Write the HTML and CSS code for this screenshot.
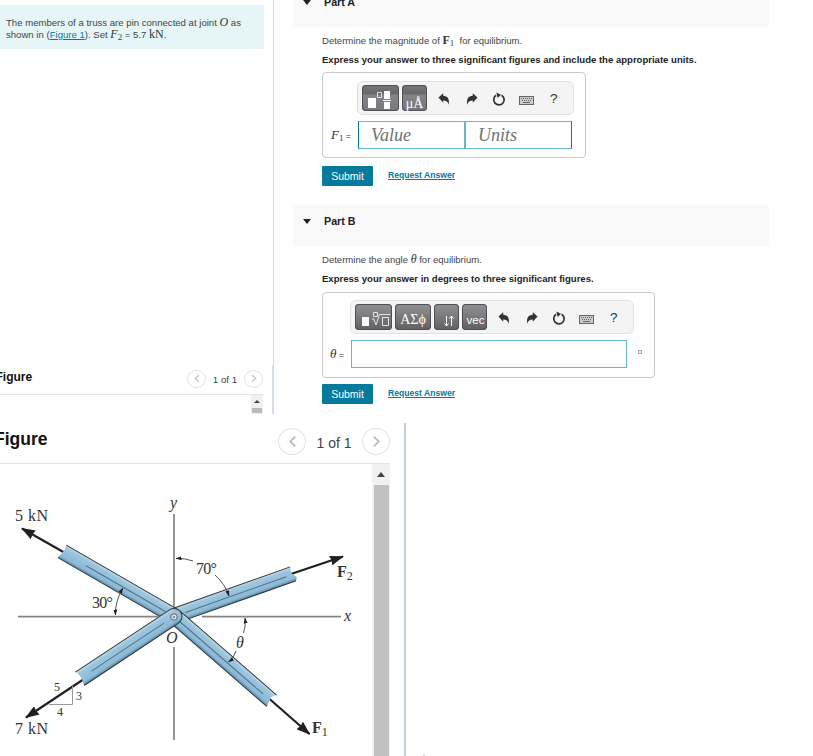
FILE: index.html
```html
<!DOCTYPE html>
<html lang="en">
<head>
<meta charset="utf-8">
<title>Truss equilibrium</title>
<link rel="stylesheet" href="styles.css">
</head>
<body>
<svg class="defs" width="0" height="0" aria-hidden="true">
  <defs>
    <symbol id="undo" viewBox="0 0 12 12"><path d="M.5 4.600 5.200.300v2.500c4.300.2 6.500 3 5.500 8.900-.9-2.700-2.200-4.100-5.500-4.100v2.200z" fill="#333"/></symbol>
    <symbol id="reset" viewBox="0 0 14 14"><path d="M9.500 3.200A5.200 5.200 0 1 1 4.200 3.300" fill="none" stroke="#333" stroke-width="1.700"/><path d="M4.300.4 9 2.700 5.700 6z" fill="#333"/></symbol>
    <symbol id="keys" viewBox="0 0 15 9"><rect x=".5" y=".5" width="14" height="8" fill="#ccc" stroke="#666"/><path d="M2 2.500h11M3 4.500h10" stroke="#666" stroke-dasharray="1 1"/><path d="M4 6.500h7" stroke="#666"/></symbol>
    <symbol id="left" viewBox="0 0 10 14"><path d="M8 1.500 2.500 7 8 12.500" fill="none" stroke="#bbb" stroke-width="2"/></symbol>
    <symbol id="right" viewBox="0 0 10 14"><path d="M2 1.500 7.500 7 2 12.500" fill="none" stroke="#bbb" stroke-width="2"/></symbol>
  </defs>
</svg>
<div class="page">
  <section class="top">
    <aside class="side">
      <div class="intro">
        <p>The members of a truss are pin connected at joint <i class="m">O</i> as</p>
        <p>shown in (<a>Figure 1</a>). Set <i class="m">F</i><sub>2</sub> = 5.7 <span class="m">kN</span>.</p>
      </div>
      <div class="fig-head small">
        <h2>Figure</h2>
        <nav><button><svg><use href="#left"/></svg></button><span>1 of 1</span><button><svg><use href="#right"/></svg></button></nav>
      </div>
      <div class="small-scroll"><b class="up"></b><i></i></div>
    </aside>
    <div class="rule"><i></i></div>
    <main>
      <header class="part first"><b class="down"></b><h3>Part A</h3></header>
      <div class="body">
        <p class="ask">Determine the magnitude of <b class="m">F</b><sub>1</sub>&nbsp; for equilibrium.</p>
        <p class="how">Express your answer to three significant figures and include the appropriate units.</p>
        <div class="answer a">
          <div class="tools">
            <button class="dark"><svg width="37" height="26"><path d="M6 13h8v10H6zM22 6h6v8h-6zM22 17h6v7h-6zM21 15h8v1h-8z" fill="#fff"/><path d="M15.500 7.500h4v5h-4z" fill="none" stroke="#ddd"/></svg></button>
            <button class="dark unit"><span>μÅ</span></button>
            <svg class="undo"><use href="#undo"/></svg><svg class="redo"><use href="#undo"/></svg><svg class="reset"><use href="#reset"/></svg><svg class="keys"><use href="#keys"/></svg><span class="help">?</span>
          </div>
          <div class="entry"><label><i>F</i><sub>1</sub> <em>=</em></label><div class="field v">Value</div><div class="field u">Units</div></div>
        </div>
        <div class="actions"><button class="submit">Submit</button><a>Request Answer</a></div>
      </div>
      <header class="part second"><b class="down"></b><h3>Part B</h3></header>
      <div class="body">
        <p class="ask">Determine the angle <i class="m">θ</i> for equilibrium.</p>
        <p class="how">Express your answer in degrees to three significant figures.</p>
        <div class="answer b">
          <div class="tools">
            <button class="dark"><svg width="37" height="26"><path d="M7 13h7v9H7z" fill="#fff"/><path d="M17 15.500l1.500-1 2.500 6.500 3.500-10.500H35M27.500 13.500h6v8h-6zM18.500 8.500h4v4h-4z" fill="none" stroke="#e5e5e5"/></svg></button>
            <button class="dark greek"><span>ΑΣϕ</span></button>
            <button class="dark arrows"><svg width="25" height="26"><path d="M12.500 12v10M10.500 19.500l2 2.500 2-2.500M17.500 22V12M15.500 14.500l2-2.500 2 2.500" fill="none" stroke="#fff"/></svg></button>
            <button class="dark vec"><span>vec</span></button>
            <svg class="undo"><use href="#undo"/></svg><svg class="redo"><use href="#undo"/></svg><svg class="reset"><use href="#reset"/></svg><svg class="keys"><use href="#keys"/></svg><span class="help">?</span>
          </div>
          <div class="entry"><label><i>θ</i> <em>=</em></label><div class="field wide"></div><span class="deg"></span></div>
        </div>
        <div class="actions"><button class="submit">Submit</button><a>Request Answer</a></div>
      </div>
    </main>
  </section>
  <section class="bottom">
    <div class="figure">
      <div class="fig-head large">
        <h2>Figure</h2>
        <nav><button><svg><use href="#left"/></svg></button><span>1 of 1</span><button><svg><use href="#right"/></svg></button></nav>
      </div>
      <div class="view">
        <svg class="truss" width="372" height="292" viewBox="0 464 372 292">
          <defs>
            <linearGradient id="bar" x1="0" y1="0" x2="0" y2="1"><stop offset="0" stop-color="#c3deed"/><stop offset=".2" stop-color="#9cc6df"/><stop offset=".8" stop-color="#8cb9d6"/><stop offset="1" stop-color="#4f88ad"/></linearGradient>
            <marker id="arrow" viewBox="0 0 14 10" refX="13" refY="5" markerWidth="14" markerHeight="10" markerUnits="userSpaceOnUse" orient="auto-start-reverse"><path d="M0 0 14 5 0 10 1 5z" fill="#231f20"/></marker>
            <marker id="tip" viewBox="0 0 6 4" refX="5.500" refY="2" markerWidth="6" markerHeight="4" markerUnits="userSpaceOnUse" orient="auto-start-reverse"><path d="M0 0 6 2 0 4z" fill="#231f20"/></marker>
          </defs>
          <g stroke="#858585" stroke-width="1.700"><path d="M174 514v94M174 647v93M18 616.700h140M202 616.700h139"/></g>
          <g stroke="#231f20" stroke-width="2.200">
            <path d="M66 553.500 22 528.500" marker-end="url(#arrow)"/><path d="M291 574 343 556.500" marker-end="url(#arrow)"/><path d="M84 679 26 717.500" marker-end="url(#arrow)"/><path d="M269 698.500 309.500 734" marker-end="url(#arrow)"/>
          </g>
          <g transform="translate(174 616.500) rotate(-19.500)"><path d="M0-8H126L125-2 129 4 127 7H0z" fill="url(#bar)"/><path d="M0-8H126M0 7H127" stroke="#333"/><path d="M12 0H119" stroke="#557284"/></g>
          <g transform="translate(174 616.500) rotate(30)"><path d="M0-8H-129L-128-3-130 7H0z" fill="url(#bar)"/><path d="M0-8H-129M0 7H-130" stroke="#333"/><path d="M-10 0H-102" stroke="#557284"/></g>
          <g transform="translate(174 616.500) rotate(41)"><path d="M0-8H129L126-3 129 7H0z" fill="url(#bar)"/><path d="M0-8H129M0 7H129" stroke="#333"/><path d="M8 0H118" stroke="#557284"/></g>
          <g transform="translate(174 616.500) rotate(-33.500)"><path d="M0-8H-112L-111 0-113 8H0A8 8 0 0 0 0-8z" fill="url(#bar)"/><path d="M-113-8H0A8 8 0 0 1 0 8H-113" fill="none" stroke="#333"/><path d="M-12 0H-99" stroke="#557284"/></g>
          <circle cx="174" cy="617" r="3.200" fill="#ddd" stroke="#667"/><circle cx="174" cy="617" r="1" fill="#777"/>
          <g fill="none" stroke="#555"><path d="M176 558.500Q185 558 193 561" marker-start="url(#tip)"/><path d="M215 575Q225 584 229 596" marker-end="url(#tip)"/><path d="M123 588Q115 601 115.500 615" marker-start="url(#tip)" marker-end="url(#tip)"/><path d="M245 618Q246 626 243.500 633" marker-start="url(#tip)"/><path d="M236 651Q234 658 228.500 662" marker-end="url(#tip)"/><path d="M49 704.500H72.500V686" stroke="#999"/></g>
          <g class="labels">
            <text x="15" y="521" textLength="33">5 kN</text><text x="15" y="734" textLength="33">7 kN</text>
            <text x="170" y="508" class="it">y</text><text x="344" y="621" class="it">x</text><text x="166" y="643" class="it">O</text><text x="236" y="648" class="it">θ</text>
            <text x="196" y="574" textLength="21">70°</text><text x="92" y="608" textLength="21">30°</text>
            <text x="337" y="577"><tspan class="bold">F</tspan><tspan class="tiny" dy="3">2</tspan></text><text x="312" y="733"><tspan class="bold">F</tspan><tspan class="tiny" dy="3">1</tspan></text>
            <text x="54" y="691" class="tiny">5</text><text x="76" y="700" class="tiny">3</text><text x="57" y="716" class="tiny">4</text>
          </g>
        </svg>
        <div class="scroll"><b class="up"></b><i></i></div>
      </div>
    </div>
    <div class="rule2"></div>
    <div class="speck"></div>
  </section>
</div>
</body>
</html>
```
FILE: styles.css
```css
* { box-sizing: border-box; }
body { margin: 0; background: #fff; color: #444; font-family: "Liberation Sans", Arial, sans-serif; overflow: hidden; }
p, h2, h3 { margin: 0; }
button { border: 0; padding: 0; font-family: inherit; }
svg { display: block; flex: none; }
.defs { position: absolute; }
.page { width: 813px; height: 756px; display: grid; grid-template-rows: 414px 333px; row-gap: 9px; overflow: hidden; }
.top { display: grid; grid-template-columns: 272px 21px 476px; }
.side { padding-top: 5px; min-width: 0; }
.intro { width: 264px; height: 44px; padding: 11px 0 0 6px; background: #e6f6f7; font-size: 9.580px; line-height: 12px; white-space: nowrap; }
.intro p { height: 12px; }
.m { font-family: "Liberation Serif", serif; font-size: 12px; line-height: 1; color: #333; }
sub { font-family: "Liberation Serif", serif; font-size: 9px; line-height: 0; vertical-align: -2px; }
a { color: #047a9c; text-decoration: underline; }
.fig-head { display: flex; justify-content: space-between; }
.fig-head h2 { color: #111; white-space: nowrap; }
nav { display: flex; align-items: center; }
nav button { display: grid; place-items: center; background: #fff; border: 1px solid #e2e2e2; border-radius: 50%; }
.small { width: 264px; height: 26px; margin-top: 320px; border-bottom: 1px solid #e5e5e5; }
.small h2 { font-size: 12px; line-height: 16px; margin-left: -4.500px; }
.small nav { height: 19px; margin-right: 1px; font-size: 9.750px; }
.small nav button { width: 19px; height: 18px; }
.small nav span { width: 38px; text-align: center; padding-top: 2px; }
.small nav svg { width: 6px; height: 9px; }
.small-scroll { margin-left: 251px; width: 12px; height: 19px; background: #f1f1f1; display: flex; flex-direction: column; align-items: center; }
.small-scroll i { width: 10px; height: 5px; background: #bbb; margin-top: 5px; }
.up { border: 3px solid transparent; border-top: 0; border-bottom: 3px solid #444; margin-top: 5px; }
.rule { display: flex; padding-left: 1px; background: linear-gradient(#cfdae6, #cfdae6) 1px 0 / 1px 100% no-repeat; }
.rule i { width: 1px; height: 49px; align-self: end; margin-left: -1px; background: #d5e1ee; }
.part { display: flex; background: #f9f9f9; padding-left: 10px; }
.part h3 { font-size: 10.700px; line-height: 14px; color: #222; margin-left: 13px; }
.first { height: 27px; }
.first h3 { margin-top: -5px; }
.second { height: 41px; margin-top: 19px; padding-top: 9px; }
.down { width: 8px; border: 4px solid transparent; border-top: 5px solid #222; border-bottom: 0; height: 5px; margin-top: 5px; }
.first .down { margin-top: 0; }
.body { padding-left: 29px; }
.ask, .how { height: 14px; line-height: 14px; font-size: 9.560px; white-space: nowrap; }
.ask { margin-top: 7px; }
.how { margin-top: 5px; font-weight: bold; color: #222; }
.answer { height: 86px; margin-top: 5px; border: 1px solid #c9c9c9; border-radius: 4px; padding-top: 8px; }
.answer.a { width: 264px; }
.answer.b { width: 333px; padding-top: 7px; margin-top: 6px; }
.tools { height: 34px; display: flex; align-items: center; background: #f4f4f4; border: 1px solid #e2e2e2; border-radius: 6px; padding-left: 4px; gap: 3px; }
.a .tools { width: 217px; margin-left: 34px; }
.b .tools { width: 284px; margin-left: 27px; }
.dark { width: 37px; height: 26px; flex: none; border-radius: 4px; background: linear-gradient(#77777b, #68686c 36%, #858589 37%, #77777b); box-shadow: inset 0 0 0 1px #505054; color: #fff; overflow: hidden; }
.b .dark { background: linear-gradient(#929296, #606064); }
.dark span { display: block; font: 14px/15px "Liberation Serif", serif; margin-top: 11px; }
.unit, .arrows, .vec { width: 25px; }
.dark.greek { width: 36px; }
.dark.greek span { margin-top: 4px; }
.dark.vec span { font: 11.500px/14px "Liberation Sans", sans-serif; margin: 6px 0 0 2px; }
.undo, .redo { width: 12px; height: 12px; margin-top: 2px; }
.undo { margin-left: 8px; }
.redo { transform: scaleX(-1); margin-left: 13px; }
.reset { width: 14px; height: 14px; margin: 2px 0 0 11px; }
.keys { width: 15px; height: 9px; margin: 5px 0 0 10px; }
.help { font-size: 13.500px; line-height: 16px; color: #333; margin: 2px 0 0 13px; }
.entry { display: flex; margin-top: 6px; height: 29px; font-family: "Liberation Serif", serif; }
.entry label { width: 35px; padding-left: 8px; font-size: 13px; line-height: 28px; color: #333; white-space: nowrap; }
.entry em { font: 9px "Liberation Sans", sans-serif; margin-left: -1px; }
.field { border: 1px solid #67b4cc; height: 28px; font-size: 18px; line-height: 27px; font-style: italic; color: #707070; padding-left: 12px; }
.v { width: 107px; border-left-color: #047a9c; }
.u { width: 107px; border-right-color: #047a9c; }
.b .entry label { width: 28px; padding-left: 7px; }
.wide { width: 276px; }
.deg { width: 4px; height: 4px; border: 1px solid #999; border-radius: 1px; flex: none; margin: 10px 0 0 11px; }
.actions { margin-top: 8px; height: 20px; display: flex; align-items: center; gap: 15px; }
.b + .actions { margin-top: 6px; }
.submit { width: 51px; height: 20px; background: #047a9c; color: #fff; font-size: 10.500px; border-radius: 1px; }
.actions a { font-size: 8.600px; line-height: 14px; font-weight: bold; margin-top: -2px; }
.bottom { display: flex; }
.figure { width: 390px; }
.large { height: 41px; border-bottom: 1px solid #e3e3e3; }
.large h2 { font-size: 17.500px; line-height: 22px; margin: 5px 0 0 -6px; }
.large nav { height: 36px; font-size: 14px; }
.large nav button { width: 28px; height: 27px; }
.large nav span { width: 56px; text-align: center; padding-top: 4px; }
.large nav svg { width: 9px; height: 13px; }
.view { display: flex; }
.scroll { width: 18px; height: 292px; background: #f1f1f1; display: flex; flex-direction: column; align-items: center; }
.scroll .up { border-width: 0 4px 5px; margin-top: 8px; }
.scroll i { width: 15px; flex: 1; margin-top: 8px; background: #c1c1c1; }
.rule2 { width: 2px; margin-left: 14px; background: #bccfe3; }
.speck { width: 2px; height: 1px; background: #ccc; align-self: end; margin-left: 17px; }
.labels { font: 16px "Liberation Serif", serif; fill: #333; }
.it { font-style: italic; }
.bold { font-weight: bold; }
.tiny { font-size: 12px; }
```
